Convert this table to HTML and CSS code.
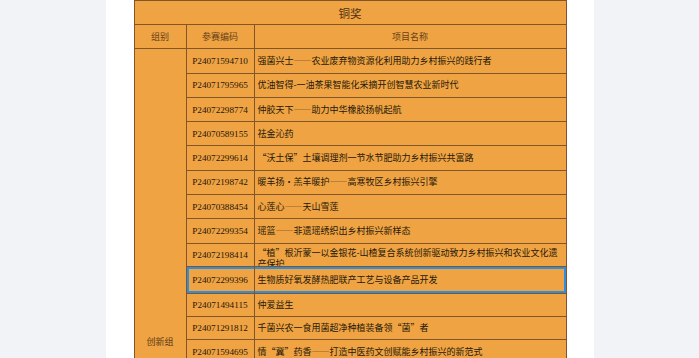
FILE: index.html
```html
<!DOCTYPE html>
<html lang="zh-CN">
<head>
<meta charset="utf-8">
<title>铜奖</title>
<link rel="stylesheet" href="styles.css">
</head>
<body>
<div class="page">
  <main class="sheet">
    <table class="award">
      <colgroup>
        <col class="c-group">
        <col class="c-code">
        <col class="c-name">
      </colgroup>
      <thead>
        <tr class="r-title"><th colspan="3" class="title">铜奖</th></tr>
        <tr class="r-head"><th>组别</th><th>参赛编码</th><th>项目名称</th></tr>
      </thead>
      <tbody>
        <tr class="r"><td rowspan="13" class="group">创新组</td><td class="code">P24071594710</td><td class="name">强菌兴士——农业废弃物资源化利用助力乡村振兴的践行者</td></tr>
        <tr class="r"><td class="code">P24071795965</td><td class="name">优油智得-一油茶果智能化采摘开创智慧农业新时代</td></tr>
        <tr class="r"><td class="code">P24072298774</td><td class="name">仲胶天下——助力中华橡胶扬帆起航</td></tr>
        <tr class="r"><td class="code">P24070589155</td><td class="name">祛金沁药</td></tr>
        <tr class="r"><td class="code">P24072299614</td><td class="name">“沃土保”土壤调理剂一节水节肥助力乡村振兴共富路</td></tr>
        <tr class="r"><td class="code">P24072198742</td><td class="name">暖羊扬·羔羊暖护——高寒牧区乡村振兴引擎</td></tr>
        <tr class="r"><td class="code">P24070388454</td><td class="name">心莲心——天山雪莲</td></tr>
        <tr class="r"><td class="code">P24072299354</td><td class="name">瑶篮——非遗瑶绣织出乡村振兴新样态</td></tr>
        <tr class="r-wrap"><td class="code">P24072198414</td><td class="name name-wrap"><div class="clip">“植”根沂蒙一以金银花-山楂复合系统创新驱动致力乡村振兴和农业文化遗产保护</div></td></tr>
        <tr class="r-pick pick"><td class="code">P24072299396</td><td class="name">生物质好氧发酵热肥联产工艺与设备产品开发</td></tr>
        <tr class="r-low"><td class="code">P24071494115</td><td class="name">仲爱益生</td></tr>
        <tr class="r-low"><td class="code">P24071291812</td><td class="name">千菌兴农一食用菌超净种植装备领“菌”者</td></tr>
        <tr class="r"><td class="code">P24071594695</td><td class="name">情“冀”药香——打造中医药文创赋能乡村振兴的新范式</td></tr>
      </tbody>
    </table>
  </main>
</div>
</body>
</html>
```
FILE: styles.css
```css
html, body {
  margin: 0;
  padding: 0;
}

body {
  background: #f2f3f7;
  font-family: "Noto Sans CJK SC", sans-serif;
  overflow: hidden;
}

.page {
  display: flex;
  justify-content: center;
}

.sheet {
  width: 488px;
  min-height: 100vh;
  box-sizing: border-box;
  padding: 0 28px;
  background: #ffffff;
}

.award {
  width: 432px;
  table-layout: fixed;
  border-collapse: collapse;
  background: #f0a342;
}

.c-group { width: 52px; }
.c-code { width: 68px; }
.c-name { width: 312px; }

.award th,
.award td {
  border: 1px solid #80552a;
  padding: 0;
  font-weight: normal;
  vertical-align: middle;
}

.r-title { height: 24px; }
.r-head { height: 24.3px; }
.r { height: 24.3px; }
.r-wrap { height: 22.7px; }
.r-pick { height: 26.7px; }
.r-low { height: 23.3px; }

.title {
  font-size: 11.5px;
  line-height: 14px;
  color: #4e3112;
  text-align: center;
}

.r-head th {
  font-size: 9px;
  line-height: 12px;
  color: #654219;
  text-align: center;
}

.group {
  vertical-align: top !important;
  padding-top: 287px !important;
  font-size: 9px;
  line-height: 12px;
  color: #5a3a18;
  text-align: center;
}

.code {
  font-family: "Liberation Serif", serif;
  font-size: 9.2px;
  line-height: 12px;
  color: #1f150a;
  text-align: center;
}

.name {
  font-size: 9px;
  line-height: 12px;
  color: #24180a;
  text-align: left;
  padding-left: 3px !important;
  white-space: nowrap;
}

.name-wrap {
  vertical-align: top !important;
  white-space: normal;
  padding-top: 3px !important;
}

/* two-line title: the second line runs under the next row */
.clip {
  line-height: 11px;
  max-height: 19.5px;
  overflow: hidden;
}

/* selected row frame */
.pick .code {
  box-shadow: inset 2px 2px 0 #2e8fdc, inset 0 -2px 0 #2e8fdc;
}

.pick .name {
  box-shadow: inset -2px 2px 0 #2e8fdc, inset 0 -2px 0 #2e8fdc;
}
```
